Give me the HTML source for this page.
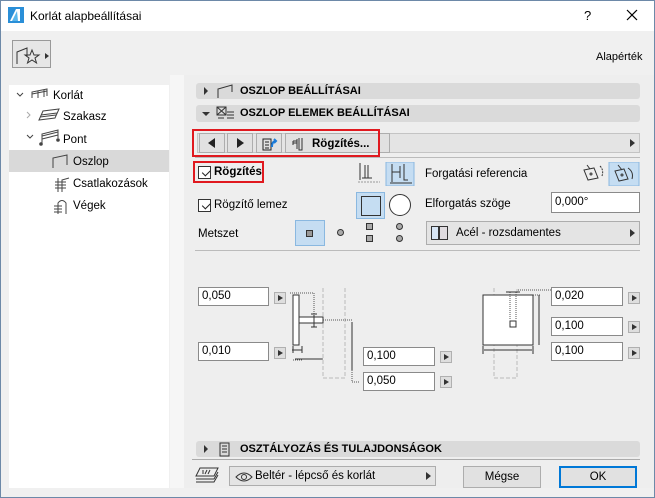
<!DOCTYPE html>
<html><head><meta charset="utf-8"><style>
*{box-sizing:border-box;margin:0;padding:0}
body{width:655px;height:498px;overflow:hidden;font-family:"Liberation Sans",sans-serif;font-size:11.5px;color:#000;background:#f0f0f0;position:relative}
.a{position:absolute}
.win{left:0;top:0;width:655px;height:498px;border:1px solid #6d89a8}
.hdr{background:#dadada;border-radius:3px;height:16px;font-weight:bold;font-size:11px;line-height:16px}
.inp{background:#fff;border:1px solid #8a8a8a;height:19px;padding-left:3px;line-height:17px;font-size:11.5px}
.ab{width:12px;height:12px;background:#dedede;border:1px solid #b0b0b0}
.ab:after{content:"";position:absolute;left:3px;top:2px;border-left:5px solid #333;border-top:3.5px solid transparent;border-bottom:3.5px solid transparent}
.btn{background:#e1e1e1;border:1px solid #adadad}
.tri{border-left:5px solid #333;border-top:4px solid transparent;border-bottom:4px solid transparent;width:0;height:0}
.cb{width:13px;height:13px;border:1px solid #333;background:#fff}
.cb:after{content:"";position:absolute;left:2px;top:1px;width:7px;height:4px;border-left:1.5px solid #222;border-bottom:1.5px solid #222;transform:rotate(-45deg) translate(0px,2px)}
</style></head><body>
<div class="a win"></div>
<div class="a" style="left:1px;top:1px;width:653px;height:30px;background:#fff"></div>
<svg class="a" style="left:8px;top:7px" width="16" height="16"><rect width="16" height="16" fill="#2a8fd8"/><path d="M2 14 L8 2 L12 2 L12 14Z" fill="#fff"/><path d="M4 14 L9 4 L10 14Z" fill="#5ab7ec"/></svg>
<div class="a" style="left:30px;top:9px;font-size:12px">Korlát alapbeállításai</div>
<div class="a" style="left:584px;top:8px;font-size:13px">?</div>
<svg class="a" style="left:626px;top:9px" width="12" height="12"><path d="M1 1 L11 11 M11 1 L1 11" stroke="#000" stroke-width="1.2"/></svg>
<div class="a btn" style="left:12px;top:40px;width:39px;height:28px;background:#e6e6e6;border-color:#999"></div>
<svg class="a" style="left:15px;top:44px" width="36" height="22"><path d="M2 20 V8 L12 4 V12" fill="none" stroke="#333"/><path d="M17 6 l2 5 5 0 -4 3 1.5 5 -4.5 -3 -4.5 3 1.5 -5 -4 -3 5 0z" fill="none" stroke="#333"/><path d="M30 9 l4 3 -4 3z" fill="#333"/></svg>
<div class="a" style="left:596px;top:51px;font-size:11px">Alapérték</div>
<!-- tree -->
<div class="a" style="left:9px;top:85px;width:160px;height:403px;background:#fff"></div>
<div class="a" style="left:170px;top:75px;width:14px;height:413px;background:#f6f6f6"></div>
<div class="a" style="left:9px;top:150px;width:160px;height:22px;background:#d9d9d9"></div>
<svg class="a" style="left:14px;top:88px" width="60" height="130" fill="none" stroke="#444">
<path d="M3 5 l3 3 3-3"/><path d="M18 10 V4 L33 1 V8 M24 10 V3 M30 9 V2 M18 6 L33 3"/>
<path d="M13 24 l3 3 -3 3" stroke="#aaa"/><path d="M25 32 L29 23 L45 21 L41 30Z M27 27 L43 25 M26 29 L42 27"/>
<path d="M13 47 l3 3 3-3"/><path d="M28 56 V46 L44 42 V50 M28 48 L44 44 M28 51 L44 47"/><circle cx="27" cy="56" r="1.3" fill="#444"/><circle cx="44" cy="52" r="1.3" fill="#444"/>
<path d="M39 80 V70 L53 67 V77"/>
<path d="M44 104 V90 M48 104 V92 L55 90 M41 94 H52 M41 97 H52 M41 100 H52"/>
<path d="M44 126 V115 Q48 110 52 115 V126 M40 118 H48 M40 121 H48 M40 124 H48"/>
</svg>
<div class="a" style="left:53px;top:90px">Korlát</div>
<div class="a" style="left:63px;top:111px">Szakasz</div>
<div class="a" style="left:63px;top:134px">Pont</div>
<div class="a" style="left:73px;top:156px">Oszlop</div>
<div class="a" style="left:73px;top:178px">Csatlakozások</div>
<div class="a" style="left:73px;top:200px">Végek</div>
<!-- right -->
<div class="a" style="left:184px;top:75px;width:470px;height:413px;background:#eeeeee"></div>
<div class="a hdr" style="left:196px;top:83px;width:444px"><div class="a tri" style="left:8px;top:4px;border-left-width:4px"></div><svg class="a" style="left:20px;top:1px" width="20" height="15"><path d="M2 14 V5 L16 1 V8" fill="none" stroke="#333"/></svg><span class="a" style="left:44px">OSZLOP BEÁLLÍTÁSAI</span></div>
<div class="a hdr" style="left:196px;top:105px;width:444px;height:17px"><div class="a" style="left:6px;top:7px;border-top:4px solid #333;border-left:4px solid transparent;border-right:4px solid transparent"></div><svg class="a" style="left:20px;top:1px" width="20" height="15"><rect x="1" y="1" width="9" height="8" fill="none" stroke="#333"/><path d="M1 1 L10 9 M10 1 L1 9 M11 6 H18 M11 9 H18 M11 12 H18 M2 12 H8" stroke="#333" fill="none"/></svg><span class="a" style="left:44px">OSZLOP ELEMEK BEÁLLÍTÁSAI</span></div>
<!-- toolbar -->
<div class="a btn" style="left:197px;top:133px;width:443px;height:20px;background:#e4e4e4;border-color:#c4c4c4"></div>
<div class="a tri" style="left:630px;top:139px"></div>
<div class="a btn" style="left:199px;top:133px;width:26px;height:20px"><div class="a" style="left:8px;top:4px;border-right:7px solid #222;border-top:5px solid transparent;border-bottom:5px solid transparent"></div></div>
<div class="a btn" style="left:227px;top:133px;width:26px;height:20px"><div class="a" style="left:9px;top:4px;border-left:7px solid #222;border-top:5px solid transparent;border-bottom:5px solid transparent"></div></div>
<div class="a btn" style="left:256px;top:133px;width:26px;height:20px"><svg class="a" style="left:5px;top:3px" width="16" height="14"><path d="M1 2 H9 V13 H1Z M3 5 H7 M3 8 H7 M3 11 H7" fill="none" stroke="#222"/><path d="M10 10 Q10 4 14 4 M12 2 l2 2 -2 2" fill="none" stroke="#1a7ad8" stroke-width="2"/></svg></div>
<div class="a btn" style="left:285px;top:133px;width:105px;height:20px"><svg class="a" style="left:6px;top:3px" width="12" height="14"><path d="M1 4 H5 M1 4 V8 M1 6 H5 M5 2 V12 M7 1 V13 H10 V1" fill="none" stroke="#333"/></svg><span class="a" style="left:26px;top:4px;font-weight:bold">Rögzítés...</span></div>
<div class="a" style="left:192px;top:129px;width:188px;height:28px;border:2px solid #e0191f"></div>
<div class="a" style="left:195px;top:157px;width:445px;height:1px;background:#bbb"></div>
<!-- row1 -->
<div class="a" style="left:193px;top:161px;width:71px;height:22px;border:2px solid #e0191f"></div>
<div class="a cb" style="left:198px;top:166px"></div>
<div class="a" style="left:214px;top:166px;font-weight:bold">Rögzítés</div>
<svg class="a" style="left:356px;top:162px" width="60" height="24" fill="none" stroke="#333"><path d="M4 1 V18 M9 3 V16 M12 3 V16 M6 16 H16" /><path d="M2 20 H24" stroke="#999" stroke-dasharray="2 1"/><rect x="30" y="0" width="28" height="24" fill="#c5ddf2" stroke="#8ab8e0"/><path d="M36 2 V20 M36 10 H44 M44 4 V16 M48 2 V18 H52 M34 21 H56" /></svg>
<div class="a" style="left:425px;top:168px">Forgatási referencia</div>
<svg class="a" style="left:578px;top:162px" width="62" height="24" fill="none" stroke="#333"><path d="M6 8 L16 6 L20 16 L10 18Z M9 3 L12 7"/><circle cx="13" cy="12" r="1"/><path d="M22 4 Q26 8 24 14" stroke-dasharray="2 1"/><rect x="31" y="0" width="30" height="24" fill="#c5ddf2" stroke="#8ab8e0"/><path d="M37 9 L46 7 L50 17 L41 19Z M40 3 L44 8 M50 6 Q56 10 54 17"/><circle cx="44" cy="13" r="1"/></svg>
<!-- row2 -->
<div class="a cb" style="left:198px;top:199px"></div>
<div class="a" style="left:214px;top:199px">Rögzítő lemez</div>
<div class="a" style="left:356px;top:192px;width:29px;height:27px;background:#c5ddf2;border:1px solid #8ab8e0"><div class="a" style="left:4px;top:3px;width:20px;height:20px;border:1px solid #333"></div></div>
<div class="a" style="left:389px;top:194px;width:22px;height:22px;border:1px solid #333;border-radius:50%;background:#fff"></div>
<div class="a" style="left:425px;top:198px">Elforgatás szöge</div>
<div class="a inp" style="left:551px;top:192px;width:89px;height:21px;line-height:19px">0,000°</div>
<!-- row3 -->
<div class="a" style="left:198px;top:228px">Metszet</div>
<div class="a" style="left:295px;top:220px;width:30px;height:26px;background:#c5ddf2;border:1px solid #8ab8e0"><div class="a" style="left:10px;top:9px;width:7px;height:7px;border:1px solid #333;background:#999"></div></div>
<div class="a" style="left:337px;top:229px;width:7px;height:7px;border:1px solid #333;border-radius:50%;background:#aaa"></div>
<div class="a" style="left:366px;top:223px;width:7px;height:7px;border:1px solid #333;background:#aaa"></div>
<div class="a" style="left:366px;top:235px;width:7px;height:7px;border:1px solid #333;background:#aaa"></div>
<div class="a" style="left:396px;top:223px;width:7px;height:7px;border:1px solid #333;border-radius:50%;background:#aaa"></div>
<div class="a" style="left:396px;top:235px;width:7px;height:7px;border:1px solid #333;border-radius:50%;background:#aaa"></div>
<div class="a btn" style="left:426px;top:221px;width:214px;height:24px;background:#e4e4e4"><div class="a" style="left:4px;top:4px;width:8px;height:14px;border:1px solid #333;background:#d8e6f5"></div><div class="a" style="left:12px;top:4px;width:9px;height:14px;border:1px solid #333;background:#e0dce0"></div><span class="a" style="left:29px;top:5px">Acél - rozsdamentes</span><div class="a tri" style="left:203px;top:7px"></div></div>
<div class="a" style="left:195px;top:250px;width:445px;height:1px;background:#bbb"></div>
<!-- inputs -->
<div class="a inp" style="left:198px;top:287px;width:71px">0,050</div><div class="a ab" style="left:274px;top:292px"></div>
<div class="a inp" style="left:198px;top:342px;width:71px">0,010</div><div class="a ab" style="left:274px;top:347px"></div>
<div class="a inp" style="left:363px;top:347px;width:72px">0,100</div><div class="a ab" style="left:440px;top:351px"></div>
<div class="a inp" style="left:363px;top:372px;width:72px">0,050</div><div class="a ab" style="left:440px;top:376px"></div>
<div class="a inp" style="left:551px;top:287px;width:72px">0,020</div><div class="a ab" style="left:628px;top:292px"></div>
<div class="a inp" style="left:551px;top:317px;width:72px">0,100</div><div class="a ab" style="left:628px;top:321px"></div>
<div class="a inp" style="left:551px;top:342px;width:72px">0,100</div><div class="a ab" style="left:628px;top:347px"></div>
<svg class="a" style="left:280px;top:280px" width="100" height="110" fill="none">
<g stroke="#bbb" stroke-dasharray="4 2"><path d="M43 8 V98 H65 V8"/></g>
<rect x="13" y="15" width="6" height="50" fill="#fff" stroke="#333"/>
<rect x="19" y="37" width="24" height="6" fill="#fff" stroke="#333"/>
<g stroke="#555" stroke-dasharray="1 1"><path d="M10 13 H34 V35 M43 40 H72 M22 79 H43 M72 90 V102 H80 M22 80 H12"/></g>
<g stroke="#333"><path d="M34 35 V47 M31 34 H37 M31 47 H37 M72 42 V90 M15 79 H42 M12 70 H22 M13 66 V73 M22 66 V73"/></g>
</svg>
<svg class="a" style="left:480px;top:280px" width="75" height="110" fill="none">
<g stroke="#bbb" stroke-dasharray="4 2"><path d="M14 8 V98 H37 V8"/></g>
<rect x="3" y="15" width="50" height="50" fill="#fff" stroke="#333"/>
<rect x="30" y="41" width="6" height="6" fill="#fff" stroke="#333"/>
<g stroke="#555" stroke-dasharray="1 1"><path d="M30 12 V40 M36 12 V40 M38 10 H71 M53 15 H60"/></g>
<g stroke="#333"><path d="M26 12 H40 M59 15 V65 M4 70 H52 M3 66 V74 M53 66 V74"/></g>
</svg>
<!-- bottom -->
<div class="a hdr" style="left:196px;top:441px;width:444px;height:16px"><div class="a tri" style="left:8px;top:4px;border-left-width:4px"></div><svg class="a" style="left:22px;top:1px" width="14" height="15"><path d="M2 1 H11 V14 H2Z M4 4 H9 M4 7 H9 M4 10 H9" fill="none" stroke="#333"/></svg><span class="a" style="left:44px">OSZTÁLYOZÁS ÉS TULAJDONSÁGOK</span></div>
<div class="a" style="left:192px;top:459px;width:448px;height:1px;background:#aaa"></div>
<svg class="a" style="left:194px;top:466px" width="26" height="20" fill="none" stroke="#333"><path d="M6 2 H24 L20 10 H2Z M2 13 H20 L24 6 M2 16 H20 L24 9 M9 4 V8 M13 4 L11 8 M16 4 L14 8"/></svg>
<div class="a btn" style="left:229px;top:466px;width:207px;height:20px;background:#e4e4e4"><svg class="a" style="left:5px;top:4px" width="18" height="12" fill="none" stroke="#333"><path d="M1 6 Q9 -2 17 6 Q9 14 1 6Z"/><circle cx="9" cy="6" r="2.5"/></svg><span class="a" style="left:25px;top:3px">Beltér - lépcső és korlát</span><div class="a tri" style="left:196px;top:5px"></div></div>
<div class="a btn" style="left:463px;top:466px;width:78px;height:22px;text-align:center;line-height:20px">Mégse</div>
<div class="a btn" style="left:559px;top:466px;width:78px;height:22px;text-align:center;line-height:18px;border:2px solid #0078d7">OK</div>
</body></html>
